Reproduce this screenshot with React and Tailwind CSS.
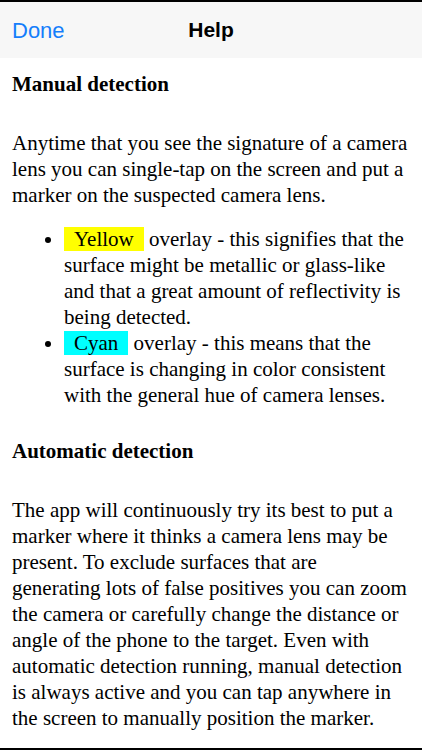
export default function App() {
  return (
    <div className="w-[422px] h-[750px] overflow-hidden bg-white flex flex-col border-t-2 border-b-2 border-black">
      {/* Nav bar */}
      <div className="h-[56px] shrink-0 bg-[#f7f7f7] relative flex items-center px-3 font-['Liberation_Sans',sans-serif]">
        <span className="text-[22px] text-[#157efb]">Done</span>
        <span className="absolute left-0 right-0 text-center text-[21px] font-semibold text-black pointer-events-none">Help</span>
      </div>

      <div className="px-3 font-['Liberation_Serif',serif] text-[21px] leading-[26px] text-black">
        <h2 className="font-bold text-[21px] mt-[13px]">Manual detection</h2>

        <p className="mt-[33px]">
          Anytime that you see the signature of a camera lens you can single-tap on the screen and put a marker on the suspected camera lens.
        </p>

        <ul className="mt-[18px] pl-[52px] list-disc">
          <li>
            <span className="bg-[#ffff00] px-[10px]">Yellow</span> overlay - this signifies that the surface might be metallic or glass-like and that a great amount of reflectivity is being detected.
          </li>
          <li>
            <span className="bg-[#00ffff] px-[10px]">Cyan</span> overlay - this means that the surface is changing in color consistent with the general hue of camera lenses.
          </li>
        </ul>

        <h2 className="font-bold text-[21px] mt-[30px]">Automatic detection</h2>

        <p className="mt-[33px]">
          The app will continuously try its best to put a marker where it thinks a camera lens may be present. To exclude surfaces that are generating lots of false positives you can zoom the camera or carefully change the distance or angle of the phone to the target. Even with automatic detection running, manual detection is always active and you can tap anywhere in the screen to manually position the marker.
        </p>
      </div>
    </div>
  );
}
